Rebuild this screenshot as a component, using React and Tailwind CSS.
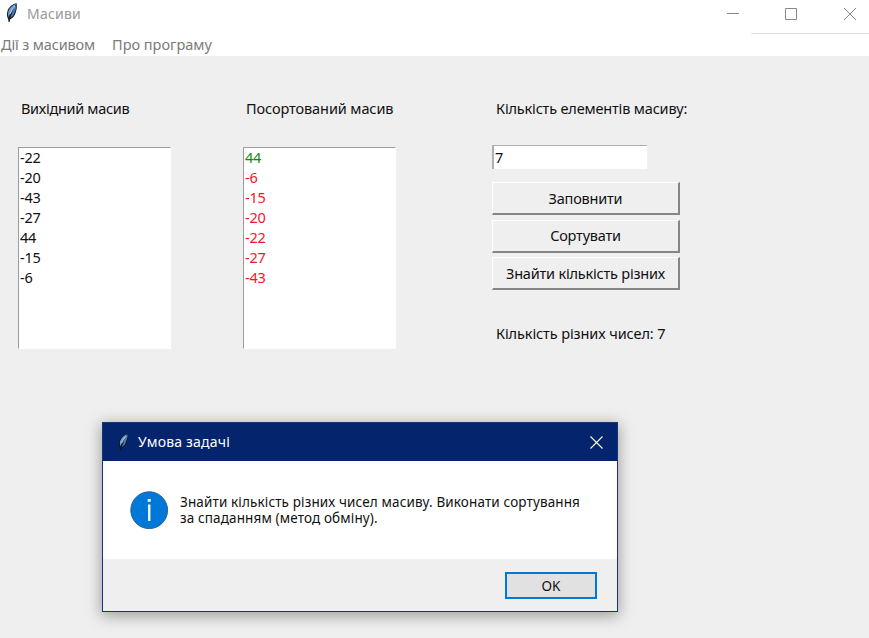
const UI_FONT = "font-['Noto_Sans','Open_Sans',sans-serif]";

function Feather({ className, outline = "#18222f" }) {
  return (
    <svg className={className} viewBox="0 0 12 20" fill="none">
      <path d="M10.600.3C7 .9 3.300 3.600 1.700 7.200.6 10 .7 13.300 1.900 15.600L3 19.600l1.300-3.300c2.500-1 4.300-3.300 5.300-6.300C10.400 7.200 11.600 3.500 10.600.3Z" fill={outline} />
      <path d="M10.500.8C7 1.800 3.800 4.600 2.500 8c-.7 2.200-.6 4.300.1 6.200C4.300 9 7 4.500 10.500.8Z" fill="#6f9fd0" />
      <path d="M10.500 1.400C7.600 5.500 5.200 9.700 4.200 15c2.100-1 3.600-3 4.400-5.500.8-2.600 2.200-5.200 1.900-8.100Z" fill="#4679b5" />
      <path d="M9 2.800C6.500 5.500 4.900 8 4 11" stroke="#a9cbea" strokeWidth="1.100" />
      <path d="M6 9.500C4.600 12 3.700 14.500 3 18.800" stroke="#141d28" strokeWidth=".9" />
    </svg>
  );
}

function ListBox({ items, colors }) {
  return (
    <ul className="h-[202px] w-[153px] border-t border-l border-t-[#9c9c9c] border-l-[#9c9c9c] border-r border-b border-r-white border-b-white bg-white">
      {items.map((n, i) => (
        <li key={n} className={`h-5 pl-px text-[14.5px] leading-[18px] tracking-[-0.2px] ${colors ? colors[i] : "text-[#111]"}`}>
          {n}
        </li>
      ))}
    </ul>
  );
}

function TkButton({ children }) {
  return (
    <button className="flex h-[33px] w-[188px] items-center justify-center border-t border-l border-r-2 border-b-2 border-t-white border-l-white border-r-[#858585] border-b-[#858585] bg-[#efefef] pb-px text-[14.5px] leading-5 tracking-[-0.2px] whitespace-nowrap">
      {children}
    </button>
  );
}

function Dialog() {
  return (
    <div className="absolute top-[422px] left-[102px] flex h-[190px] w-[516px] flex-col border border-[#173576] bg-white shadow-[0_3px_14px_1px_rgba(0,0,0,0.34)]">
      <header className="flex h-[38px] shrink-0 items-center bg-[#04246e] pr-[14px] pl-[15px] text-white">
        <Feather className="h-[19px] w-[11px] shrink-0" outline="#0c1626" />
        <span className="ml-[9px] text-[14px] leading-5 tracking-[0.2px]">Умова задачі</span>
        <svg className="ml-auto h-[13px] w-[13px]" viewBox="0 0 13 13" stroke="white" strokeWidth="1.100">
          <path d="M.5.5l12 12M12.500.5l-12 12" />
        </svg>
      </header>
      <div className="flex h-[98px] shrink-0 items-center pl-[27px]">
        <svg className="h-[39px] w-[39px]" viewBox="0 0 39 39">
          <circle cx="19.200" cy="19.200" r="18.400" fill="#0078d7" stroke="#24659b" strokeWidth="1" />
          <path d="M17.700 8h3v2.800h-3zM18.100 13.500h2.300V30h-2.300z" fill="white" />
        </svg>
        <p className="ml-[11px] text-[13.5px] leading-4 tracking-[0.13px] whitespace-nowrap text-[#111]">
          Знайти кількість різних чисел масиву. Виконати сортування
          <br />
          за спаданням (метод обміну).
        </p>
      </div>
      <footer className="flex flex-1 items-center justify-end bg-[#efefef] pr-5">
        <button className="h-[27px] w-[92px] border-[2px] border-[#0078d7] bg-[#e1e1e1] pt-px text-[13.5px] leading-5">OK</button>
      </footer>
    </div>
  );
}

export default function App() {
  return (
    <div className={`relative h-[638px] w-[869px] overflow-hidden bg-[#efefef] text-[#111] ${UI_FONT}`}>
      <header className="flex h-[34px] items-start bg-white">
        <Feather className="mt-[3px] ml-[6px] h-5 w-[12px]" />
        <h1 className="mt-1 ml-[9px] text-[14px] leading-5 tracking-[0.2px] text-[#999]">Масиви</h1>
        <div className="ml-auto flex h-[34px] w-[118px] border-b border-[#e3e3e3]">
          <svg className="-ml-6 h-[28px] w-[142px] shrink-0" viewBox="0 0 142 28" fill="none" stroke="#888">
            <path d="M0 13.500h12M58.500 8.500h11v11h-11zM117 8l12 12M129 8l-12 12" />
          </svg>
        </div>
      </header>
      <nav className="flex h-[22px] items-start gap-[17px] bg-white pl-px text-[14.5px] leading-5 text-[#7b7b7b]">
        <span className="whitespace-nowrap tracking-[-0.15px]">Дії з масивом</span>
        <span className="whitespace-nowrap tracking-[0px]">Про програму</span>
      </nav>
      <main className="flex pt-[42px] pl-[18px] text-[14.5px] leading-5">
        <section className="w-[225px]">
          <h2 className="mb-[29px] pl-[3px] tracking-[-0.3px]">Вихідний масив</h2>
          <ListBox items={["-22", "-20", "-43", "-27", "44", "-15", "-6"]} />
        </section>
        <section className="w-[249px]">
          <h2 className="mb-[29px] pl-[3px] tracking-[-0.1px]">Посортований масив</h2>
          <ListBox
            items={["44", "-6", "-15", "-20", "-22", "-27", "-43"]}
            colors={["text-[#158a15]", "text-[#f51527]", "text-[#f51527]", "text-[#f51527]", "text-[#f51527]", "text-[#f51527]", "text-[#f51527]"]}
          />
        </section>
        <section className="w-[220px]">
          <h2 className="mb-[27px] pl-1 whitespace-nowrap tracking-[-0.17px]">Кількість елементів масиву:</h2>
          <div className="h-6 w-[155px] border-t border-l-2 border-[#b0b0b0] bg-white pl-px leading-[22px]">7</div>
          <div className="mt-[13.4px] flex flex-col gap-[4.5px]">
            <TkButton>Заповнити</TkButton>
            <TkButton>Сортувати</TkButton>
            <TkButton>Знайти кількість різних</TkButton>
          </div>
          <p className="mt-[32.6px] pl-1 whitespace-nowrap tracking-[-0.1px]">Кількість різних чисел: 7</p>
        </section>
      </main>
      <Dialog />
    </div>
  );
}
